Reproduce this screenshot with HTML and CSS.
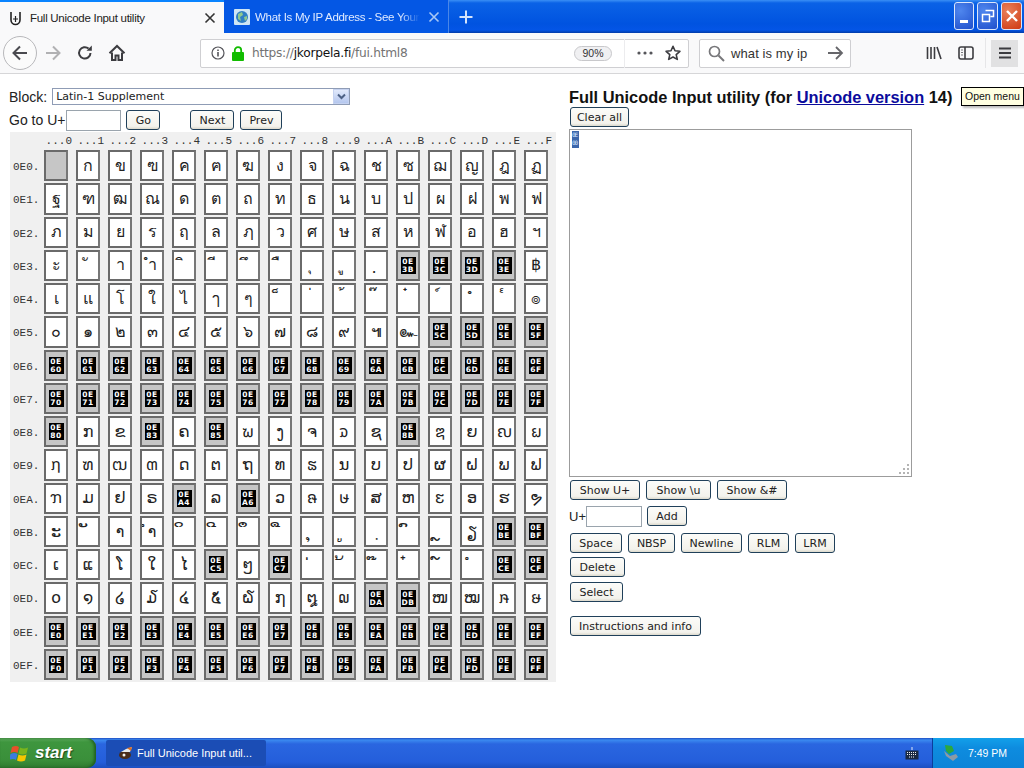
FILE: index.html
```html
<!DOCTYPE html>
<html lang="en">
<head>
<meta charset="utf-8">
<title>Full Unicode Input utility</title>
<link rel="stylesheet" href="styles.css">
</head>
<body>
<div class="window">
  <div class="tabbar">
    <div class="tab active">
      <svg class="fav" width="16" height="16" viewBox="0 0 16 16"><path d="M3 2v8a4.500 4.500 0 0 0 9 0V2" fill="none" stroke="#222" stroke-width="1.600"/><path d="M7.500 6v6M5 9h5" stroke="#222" stroke-width="1.200"/></svg>
      <span class="tabtitle">Full Unicode Input utility</span>
      <svg class="tabx" width="12" height="12" viewBox="0 0 12 12"><path d="M1.500 1.500l9 9M10.500 1.500l-9 9" stroke="#333" stroke-width="1.600"/></svg>
    </div>
    <div class="tab other">
      <svg class="fav" width="16" height="16" viewBox="0 0 16 16"><rect width="16" height="16" rx="1" fill="#cfe6f5"/><circle cx="8" cy="8" r="6" fill="#2f7fc4"/><path d="M4 5l4-2 1 3-3 2 1 4-3-2zM10 8l3-1 0 3-2 2z" fill="#8fc98f"/></svg>
      <span class="tabtitle">What Is My IP Address - See Your</span>
      <svg class="tabx" width="12" height="12" viewBox="0 0 12 12"><path d="M1.500 1.500l9 9M10.500 1.500l-9 9" stroke="#a9c8f5" stroke-width="1.600"/></svg>
    </div>
    <svg class="newtab" width="16" height="16" viewBox="0 0 16 16"><path d="M8 1.500v13M1.500 8h13" stroke="#d5e4fb" stroke-width="2"/></svg>
    <div class="winbtns">
      <div class="wb wb-blue"><span class="wb-min"></span></div>
      <div class="wb wb-blue"><svg width="14" height="14" viewBox="0 0 14 14"><path d="M4.500 1.500h8v6h-3M1.500 5.500h7v7h-7z" fill="none" stroke="#fff" stroke-width="1.500"/></svg></div>
      <div class="wb wb-red"><svg width="14" height="14" viewBox="0 0 14 14"><path d="M2 2l10 10M12 2L2 12" stroke="#fff" stroke-width="2.400"/></svg></div>
    </div>
  </div>

  <div class="toolbar">
    <div class="backbtn"><svg width="18" height="18" viewBox="0 0 18 18"><path d="M16 9H2.500M9 2.500L2.500 9 9 15.500" fill="none" stroke="#4a4a4f" stroke-width="2"/></svg></div>
    <svg class="tool fwd" width="18" height="18" viewBox="0 0 18 18"><path d="M2 9h13.500M9 2.500L15.500 9 9 15.500" fill="none" stroke="#b1b1b3" stroke-width="2"/></svg>
    <svg class="tool reload" width="16" height="16" viewBox="0 0 16 16"><path d="M13.500 8A5.700 5.700 0 1 1 11.600 3.600" fill="none" stroke="#3c3c40" stroke-width="2"/><path d="M9.500 5.800h5.300V.5z" fill="#3c3c40"/></svg>
    <svg class="tool home" width="18" height="18" viewBox="0 0 18 18"><path d="M1.500 9.200L9 2l7.500 7.200" fill="none" stroke="#3c3c40" stroke-width="2"/><path d="M4 8.500V16h3.500v-4.500h3V16H14V8.500" fill="none" stroke="#3c3c40" stroke-width="2"/></svg>
    <div class="urlbar">
      <svg class="info" width="14" height="14" viewBox="0 0 14 14"><circle cx="7" cy="7" r="6" fill="none" stroke="#55555a" stroke-width="1.200"/><path d="M7 6v4.500M7 3.400v1.500" stroke="#55555a" stroke-width="1.600"/></svg>
      <svg class="lock" width="14" height="15" viewBox="0 0 14 15"><rect x="1" y="6" width="12" height="9" rx="1" fill="#12bc00"/><path d="M3.800 6V4.300a3.200 3.200 0 0 1 6.400 0V6" fill="none" stroke="#12bc00" stroke-width="1.800"/></svg>
      <span class="url"><span class="dim">https://</span>jkorpela.fi<span class="dim">/fui.html8</span></span>
      <span class="zoompill">90%</span>
      <span class="urlsep"></span>
      <svg class="dots" width="16" height="4" viewBox="0 0 16 4"><circle cx="2" cy="2" r="1.600" fill="#55555a"/><circle cx="8" cy="2" r="1.600" fill="#55555a"/><circle cx="14" cy="2" r="1.600" fill="#55555a"/></svg>
      <svg class="star" width="16" height="16" viewBox="0 0 16 16"><path d="M8 1.300l2 4.500 4.900.5-3.700 3.300 1.100 4.800L8 12l-4.300 2.400 1.100-4.800L1.100 6.300l4.900-.5z" fill="none" stroke="#3c3c40" stroke-width="1.600" stroke-linejoin="round"/></svg>
    </div>
    <div class="searchbar">
      <svg class="mag" width="17" height="17" viewBox="0 0 17 17"><circle cx="6.500" cy="6.500" r="5" fill="none" stroke="#77777a" stroke-width="1.700"/><path d="M10.500 10.500l5.500 5.500" stroke="#77777a" stroke-width="2"/></svg>
      <span class="query">what is my ip</span>
      <svg class="go" width="17" height="16" viewBox="0 0 17 16"><path d="M1 8h14M9 2l6 6-6 6" fill="none" stroke="#66666a" stroke-width="1.800"/></svg>
    </div>
    <svg class="lib" width="16" height="14" viewBox="0 0 16 14"><path d="M1.500 1v12M5 1v12M8.500 1v12M11 1l4 12" stroke="#3c3c40" stroke-width="1.600"/></svg>
    <svg class="side" width="16" height="14" viewBox="0 0 16 14"><rect x="1" y="1" width="14" height="12" rx="2" fill="none" stroke="#3c3c40" stroke-width="1.600"/><path d="M7 1v12" stroke="#3c3c40" stroke-width="1.600"/><path d="M3 4h2M3 6.500h2M3 9h2" stroke="#77777a"/></svg>
    <span class="toolsep"></span>
    <div class="menu"><svg width="14" height="12" viewBox="0 0 14 12"><path d="M1 1.500h12M1 6h12M1 10.500h12" stroke="#3c3c40" stroke-width="1.800"/></svg></div>
  </div>

  <div class="page">
    <div class="left">
      <div class="blockrow">
        <label class="lab">Block:</label>
        <div class="select"><span>Latin-1 Supplement</span><span class="arrow"><svg width="9" height="7" viewBox="0 0 9 7"><path d="M1 1.500l3.500 3.500L8 1.500" fill="none" stroke="#4d6185" stroke-width="2"/></svg></span></div>
      </div>
      <div class="gorow">
        <span class="lab">Go to U+</span>
        <input class="field goin" type="text">
        <button class="btn b-go">Go</button>
        <button class="btn b-next">Next</button>
        <button class="btn b-prev">Prev</button>
      </div>
      <div class="chars">
        <span></span><span class="hd">...0</span><span class="hd">...1</span><span class="hd">...2</span><span class="hd">...3</span><span class="hd">...4</span><span class="hd">...5</span><span class="hd">...6</span><span class="hd">...7</span><span class="hd">...8</span><span class="hd">...9</span><span class="hd">...A</span><span class="hd">...B</span><span class="hd">...C</span><span class="hd">...D</span><span class="hd">...E</span><span class="hd">...F</span>
        <span class="rl">0E0.</span><button class="c m"></button><button class="c">ก</button><button class="c">ข</button><button class="c">ฃ</button><button class="c">ค</button><button class="c">ฅ</button><button class="c">ฆ</button><button class="c">ง</button><button class="c">จ</button><button class="c">ฉ</button><button class="c">ช</button><button class="c">ซ</button><button class="c">ฌ</button><button class="c">ญ</button><button class="c">ฎ</button><button class="c">ฏ</button>
        <span class="rl">0E1.</span><button class="c">ฐ</button><button class="c">ฑ</button><button class="c">ฒ</button><button class="c">ณ</button><button class="c">ด</button><button class="c">ต</button><button class="c">ถ</button><button class="c">ท</button><button class="c">ธ</button><button class="c">น</button><button class="c">บ</button><button class="c">ป</button><button class="c">ผ</button><button class="c">ฝ</button><button class="c">พ</button><button class="c">ฟ</button>
        <span class="rl">0E2.</span><button class="c">ภ</button><button class="c">ม</button><button class="c">ย</button><button class="c">ร</button><button class="c">ฤ</button><button class="c">ล</button><button class="c">ฦ</button><button class="c">ว</button><button class="c">ศ</button><button class="c">ษ</button><button class="c">ส</button><button class="c">ห</button><button class="c">ฬ</button><button class="c">อ</button><button class="c">ฮ</button><button class="c">ฯ</button>
        <span class="rl">0E3.</span><button class="c">ะ</button><button class="c">ั</button><button class="c">า</button><button class="c">ำ</button><button class="c">ิ</button><button class="c">ี</button><button class="c">ึ</button><button class="c">ื</button><button class="c">ุ</button><button class="c">ู</button><button class="c">ฺ</button><button class="c m"><i class="h">0E<br>3B</i></button><button class="c m"><i class="h">0E<br>3C</i></button><button class="c m"><i class="h">0E<br>3D</i></button><button class="c m"><i class="h">0E<br>3E</i></button><button class="c">฿</button>
        <span class="rl">0E4.</span><button class="c">เ</button><button class="c">แ</button><button class="c">โ</button><button class="c">ใ</button><button class="c">ไ</button><button class="c">ๅ</button><button class="c">ๆ</button><button class="c">็</button><button class="c">่</button><button class="c">้</button><button class="c">๊</button><button class="c">๋</button><button class="c">์</button><button class="c">ํ</button><button class="c">๎</button><button class="c">๏</button>
        <span class="rl">0E5.</span><button class="c">๐</button><button class="c">๑</button><button class="c">๒</button><button class="c">๓</button><button class="c">๔</button><button class="c">๕</button><button class="c">๖</button><button class="c">๗</button><button class="c">๘</button><button class="c">๙</button><button class="c">๚</button><button class="c">๛</button><button class="c m"><i class="h">0E<br>5C</i></button><button class="c m"><i class="h">0E<br>5D</i></button><button class="c m"><i class="h">0E<br>5E</i></button><button class="c m"><i class="h">0E<br>5F</i></button>
        <span class="rl">0E6.</span><button class="c m"><i class="h">0E<br>60</i></button><button class="c m"><i class="h">0E<br>61</i></button><button class="c m"><i class="h">0E<br>62</i></button><button class="c m"><i class="h">0E<br>63</i></button><button class="c m"><i class="h">0E<br>64</i></button><button class="c m"><i class="h">0E<br>65</i></button><button class="c m"><i class="h">0E<br>66</i></button><button class="c m"><i class="h">0E<br>67</i></button><button class="c m"><i class="h">0E<br>68</i></button><button class="c m"><i class="h">0E<br>69</i></button><button class="c m"><i class="h">0E<br>6A</i></button><button class="c m"><i class="h">0E<br>6B</i></button><button class="c m"><i class="h">0E<br>6C</i></button><button class="c m"><i class="h">0E<br>6D</i></button><button class="c m"><i class="h">0E<br>6E</i></button><button class="c m"><i class="h">0E<br>6F</i></button>
        <span class="rl">0E7.</span><button class="c m"><i class="h">0E<br>70</i></button><button class="c m"><i class="h">0E<br>71</i></button><button class="c m"><i class="h">0E<br>72</i></button><button class="c m"><i class="h">0E<br>73</i></button><button class="c m"><i class="h">0E<br>74</i></button><button class="c m"><i class="h">0E<br>75</i></button><button class="c m"><i class="h">0E<br>76</i></button><button class="c m"><i class="h">0E<br>77</i></button><button class="c m"><i class="h">0E<br>78</i></button><button class="c m"><i class="h">0E<br>79</i></button><button class="c m"><i class="h">0E<br>7A</i></button><button class="c m"><i class="h">0E<br>7B</i></button><button class="c m"><i class="h">0E<br>7C</i></button><button class="c m"><i class="h">0E<br>7D</i></button><button class="c m"><i class="h">0E<br>7E</i></button><button class="c m"><i class="h">0E<br>7F</i></button>
        <span class="rl">0E8.</span><button class="c m"><i class="h">0E<br>80</i></button><button class="c">ກ</button><button class="c">ຂ</button><button class="c m"><i class="h">0E<br>83</i></button><button class="c">ຄ</button><button class="c m"><i class="h">0E<br>85</i></button><button class="c">ຆ</button><button class="c">ງ</button><button class="c">ຈ</button><button class="c">ຉ</button><button class="c">ຊ</button><button class="c m"><i class="h">0E<br>8B</i></button><button class="c">ຌ</button><button class="c">ຍ</button><button class="c">ຎ</button><button class="c">ຏ</button>
        <span class="rl">0E9.</span><button class="c">ຐ</button><button class="c">ຑ</button><button class="c">ຒ</button><button class="c">ຓ</button><button class="c">ດ</button><button class="c">ຕ</button><button class="c">ຖ</button><button class="c">ທ</button><button class="c">ຘ</button><button class="c">ນ</button><button class="c">ບ</button><button class="c">ປ</button><button class="c">ຜ</button><button class="c">ຝ</button><button class="c">ພ</button><button class="c">ຟ</button>
        <span class="rl">0EA.</span><button class="c">ຠ</button><button class="c">ມ</button><button class="c">ຢ</button><button class="c">ຣ</button><button class="c m"><i class="h">0E<br>A4</i></button><button class="c">ລ</button><button class="c m"><i class="h">0E<br>A6</i></button><button class="c">ວ</button><button class="c">ຨ</button><button class="c">ຩ</button><button class="c">ສ</button><button class="c">ຫ</button><button class="c">ຬ</button><button class="c">ອ</button><button class="c">ຮ</button><button class="c">ຯ</button>
        <span class="rl">0EB.</span><button class="c">ະ</button><button class="c">ັ</button><button class="c">າ</button><button class="c">ຳ</button><button class="c">ິ</button><button class="c">ີ</button><button class="c">ຶ</button><button class="c">ື</button><button class="c">ຸ</button><button class="c">ູ</button><button class="c">຺</button><button class="c">ົ</button><button class="c">ຼ</button><button class="c">ຽ</button><button class="c m"><i class="h">0E<br>BE</i></button><button class="c m"><i class="h">0E<br>BF</i></button>
        <span class="rl">0EC.</span><button class="c">ເ</button><button class="c">ແ</button><button class="c">ໂ</button><button class="c">ໃ</button><button class="c">ໄ</button><button class="c m"><i class="h">0E<br>C5</i></button><button class="c">ໆ</button><button class="c m"><i class="h">0E<br>C7</i></button><button class="c">່</button><button class="c">້</button><button class="c">໊</button><button class="c">໋</button><button class="c">໌</button><button class="c">ໍ</button><button class="c m"><i class="h">0E<br>CE</i></button><button class="c m"><i class="h">0E<br>CF</i></button>
        <span class="rl">0ED.</span><button class="c">໐</button><button class="c">໑</button><button class="c">໒</button><button class="c">໓</button><button class="c">໔</button><button class="c">໕</button><button class="c">໖</button><button class="c">໗</button><button class="c">໘</button><button class="c">໙</button><button class="c m"><i class="h">0E<br>DA</i></button><button class="c m"><i class="h">0E<br>DB</i></button><button class="c">ໜ</button><button class="c">ໝ</button><button class="c">ໞ</button><button class="c">ໟ</button>
        <span class="rl">0EE.</span><button class="c m"><i class="h">0E<br>E0</i></button><button class="c m"><i class="h">0E<br>E1</i></button><button class="c m"><i class="h">0E<br>E2</i></button><button class="c m"><i class="h">0E<br>E3</i></button><button class="c m"><i class="h">0E<br>E4</i></button><button class="c m"><i class="h">0E<br>E5</i></button><button class="c m"><i class="h">0E<br>E6</i></button><button class="c m"><i class="h">0E<br>E7</i></button><button class="c m"><i class="h">0E<br>E8</i></button><button class="c m"><i class="h">0E<br>E9</i></button><button class="c m"><i class="h">0E<br>EA</i></button><button class="c m"><i class="h">0E<br>EB</i></button><button class="c m"><i class="h">0E<br>EC</i></button><button class="c m"><i class="h">0E<br>ED</i></button><button class="c m"><i class="h">0E<br>EE</i></button><button class="c m"><i class="h">0E<br>EF</i></button>
        <span class="rl">0EF.</span><button class="c m"><i class="h">0E<br>F0</i></button><button class="c m"><i class="h">0E<br>F1</i></button><button class="c m"><i class="h">0E<br>F2</i></button><button class="c m"><i class="h">0E<br>F3</i></button><button class="c m"><i class="h">0E<br>F4</i></button><button class="c m"><i class="h">0E<br>F5</i></button><button class="c m"><i class="h">0E<br>F6</i></button><button class="c m"><i class="h">0E<br>F7</i></button><button class="c m"><i class="h">0E<br>F8</i></button><button class="c m"><i class="h">0E<br>F9</i></button><button class="c m"><i class="h">0E<br>FA</i></button><button class="c m"><i class="h">0E<br>FB</i></button><button class="c m"><i class="h">0E<br>FC</i></button><button class="c m"><i class="h">0E<br>FD</i></button><button class="c m"><i class="h">0E<br>FE</i></button><button class="c m"><i class="h">0E<br>FF</i></button>
      </div>
    </div>
    <div class="right">
      <h1 class="title">Full Unicode Input utility (for <a class="link" href="#">Unicode version</a> 14)</h1>
      <button class="btn b-clear">Clear all</button>
      <div class="textarea"><span class="sel"><i class="selh">0E<br>00</i></span>
        <svg class="grip" width="12" height="12" viewBox="0 0 12 12"><path d="M9 1h2v2H9zM5 5h2v2H5zM9 5h2v2H9zM1 9h2v2H1zM5 9h2v2H5zM9 9h2v2H9z" fill="#b4b4b4"/></svg>
      </div>
      <div class="row r-show"><button class="btn w70">Show U+</button><button class="btn w65">Show \u</button><button class="btn w70">Show &amp;#</button></div>
      <div class="row r-add"><span class="lab lab-small">U+</span><input class="field addin" type="text"><button class="btn w40">Add</button></div>
      <div class="row r-ins"><button class="btn w52">Space</button><button class="btn w47">NBSP</button><button class="btn w61">Newline</button><button class="btn w41">RLM</button><button class="btn w40">LRM</button></div>
      <div class="row r-del"><button class="btn w55">Delete</button></div>
      <div class="row r-sel"><button class="btn w53">Select</button></div>
      <div class="row r-info"><button class="btn w131">Instructions and info</button></div>
    </div>
    <div class="tooltip">Open menu</div>
  </div>

  <div class="taskbar">
    <div class="start">
      <svg width="20" height="20" viewBox="0 0 20 20"><path d="M2 4q4-2 7 0l-1.500 6q-3-2-7 0z" fill="#e8502a"/><path d="M10 4.500q4 2 8 0l-1.500 6q-4 2-8 0z" fill="#7ab51d"/><path d="M.5 11q4-2 7 0L6 17q-3-2-7 0z" fill="#3c7be0"/><path d="M8.500 11.500q4 2 8 0L15 17.500q-4 2-8 0z" fill="#f6c700"/></svg>
      <span class="starttext">start</span>
    </div>
    <div class="taskbtn">
      <svg width="16" height="16" viewBox="0 0 16 16"><ellipse cx="7" cy="10" rx="6" ry="4" fill="#4a2c1a"/><path d="M3 7l5-3 6-2-2 5z" fill="#e9e9e9"/><path d="M9 3l5-1-1 4z" fill="#e07020"/><circle cx="6" cy="10" r="1.500" fill="#f2f2f2"/></svg>
      <span>Full Unicode Input util...</span>
    </div>
    <div class="taskfill">
      <svg width="14" height="13" viewBox="0 0 14 13"><path d="M7 0v3" stroke="#dfe8f8"/><rect x=".5" y="3.500" width="13" height="9" fill="#1b2a44"/><path d="M2 5.500h10M2 7.500h10M4 10h6" stroke="#f4f4f4" stroke-width="1.200" stroke-dasharray="1 1"/></svg>
    </div>
    <div class="tray">
      <svg width="18" height="18" viewBox="0 0 18 18"><path d="M2 7l6 5 6-2 2 3-5 4-7-5z" fill="#8d9aa5"/><path d="M3 1l7 1 2 5-5 3-3-3z" fill="#2ca83c"/></svg>
      <span class="clock">7:49 PM</span>
    </div>
  </div>
</div>
</body>
</html>
```
FILE: styles.css
```css
* { box-sizing: border-box; }
html, body { margin: 0; padding: 0; height: 100%; overflow: hidden; background: #fff; }
body { font-family: "Liberation Sans", Arial, sans-serif; color: #111; }
.window { width: 1024px; height: 768px; display: flex; flex-direction: column; }

/* tabs */
.tabbar { height: 33px; flex: none; display: flex; align-items: stretch; background: linear-gradient(#3a8ff5 0, #0a62e6 3px, #0053e0 24px, #0355e6 30px, #013ba8 33px); }
.tab { width: 224px; display: flex; align-items: center; padding: 0 8px; font-size: 11.5px; }
.tab.active { background: #f9f9fa; border-top: 2px solid #0a84ff; color: #222; }
.tab.other { width: 225px; padding-left: 10px; color: #dfeaff; background: #0457e4; border-right: 1px solid #4a86e8; }
.fav { flex: none; margin-right: 5px; }
.active .fav { margin-right: 6px; }
.tabtitle { flex: 1; white-space: nowrap; overflow: hidden; letter-spacing: -.28px; }
.other .tabtitle { mask-image: linear-gradient(to right, #000 88%, transparent); }
.tabx { flex: none; margin-left: 8px; }
.newtab { align-self: center; margin-left: 9px; }
.winbtns { margin-left: auto; display: flex; gap: 3px; padding: 2px 2px 3px 0; }
.wb { width: 20px; height: 28px; border: 1px solid #dbe6fb; border-radius: 3px; display: flex; align-items: center; justify-content: center; background: radial-gradient(circle at 30% 30%, #4f86ee, #2050cc); }
.wb + .wb { width: 21px; }
.wb-red { background: radial-gradient(circle at 30% 30%, #e9805a, #cf3a12); }
.wb-min { width: 8px; height: 3px; background: #fff; margin-top: 10px; }

/* toolbar */
.toolbar { height: 41px; flex: none; display: flex; align-items: center; background: #f9f9fa; border-bottom: 1px solid #d6d6d8; padding-left: 3px; }
.backbtn { width: 34px; height: 34px; border-radius: 50%; border: 1px solid #b8b8bb; background: #fbfbfb; display: flex; align-items: center; justify-content: center; flex: none; }
.tool { flex: none; }
.fwd { margin-left: 7px; }
.reload { margin-left: 15px; }
.home { margin-left: 15px; }
.urlbar { width: 489px; height: 29px; margin-left: 74px; background: #fff; border: 1px solid #cfcfd2; border-radius: 2px; display: flex; align-items: center; padding-left: 10px; }
.lock { margin-left: 6px; }
.url { margin-left: 7px; font: 12.2px "DejaVu Sans", sans-serif; letter-spacing: -.25px; color: #111; }
.dim { color: #737373; }
.zoompill { margin-left: auto; width: 38px; height: 15px; border: 1px solid #c8c8cb; border-radius: 8px; background: #f0f0f2; font-size: 10.5px; line-height: 13px; text-align: center; color: #333; }
.urlsep { width: 1px; height: 29px; background: #ececee; margin-left: 12px; }
.dots { margin-left: 12px; }
.star { margin-left: 12px; margin-right: 7px; }
.searchbar { width: 152px; height: 29px; margin-left: 10px; background: #fff; border: 1px solid #cfcfd2; border-radius: 2px; display: flex; align-items: center; padding-left: 8px; }
.query { margin-left: 6px; font-size: 13px; color: #333; letter-spacing: .1px; }
.go { margin-left: auto; margin-right: 6px; }
.lib { margin-left: 75px; }
.side { margin-left: 16px; }
.toolsep { width: 1px; height: 30px; background: #e6e6e8; margin-left: 11px; }
.menu { width: 27px; height: 27px; margin-left: 5px; background: #e1e1e2; display: flex; align-items: center; justify-content: center; }

/* page */
.page { flex: 1; display: flex; position: relative; min-height: 0; background: #fff; }
.left { width: 569px; flex: none; padding: 14px 0 0 9px; }
.lab { font-size: 14px; color: #222; }
.lab-small { font-size: 13px; }
.blockrow { display: flex; align-items: center; height: 17px; }
.select { width: 298px; height: 17px; margin-left: 5px; border: 1px solid #8f9cb5; display: flex; align-items: center; justify-content: space-between; padding-left: 3px; font: 11px "DejaVu Sans", sans-serif; color: #222; }
.arrow { width: 16px; height: 15px; background: linear-gradient(#e1e9fb, #b5c7ee); border: 1px solid #c5d2f0; display: flex; align-items: center; justify-content: center; }
.gorow { display: flex; align-items: center; height: 22px; margin-top: 4px; }
.field { border: 1px solid #9aa4ad; background: #fff; margin: 0; padding: 0; }
.goin { width: 55px; height: 21px; margin-left: 1px; }
.btn { height: 20px; padding: 0; border: 1px solid #20405a; border-radius: 3px; background: linear-gradient(#fcfcf9, #f3f2ec 85%, #dcd9cc); font: 11px "DejaVu Sans", sans-serif; color: #222; }
.b-go { width: 34px; margin-left: 5px; }
.b-next { width: 44px; margin-left: 30px; }
.b-prev { width: 42px; margin-left: 6px; }

.chars { width: 546px; margin: 1px 0 0 1px; background: #f0f0f0; display: grid; grid-template-columns: 34px repeat(16, 32px); grid-template-rows: 18px repeat(16, 33.27px); align-items: start; }
.hd { font: 11px/18px "Liberation Mono", monospace; color: #333; text-align: right; padding-right: 3px; transform: translateX(-1px); white-space: nowrap; }
.rl { font: 11px/34px "Liberation Mono", monospace; color: #333; padding-left: 3px; }
.c { width: 24px; height: 31.27px; padding: 0; border: 2px solid #6a6a6a; border-right-color: #777; background: #fff; font: 16px/1 "DejaVu Sans", "Noto Sans", sans-serif; color: #222; display: flex; align-items: center; justify-content: center; overflow: hidden; }
.m { background: #c6c6c6; }
.h { display: block; width: 15px; height: 17px; padding-top: 1px; background: #000; color: #fff; font: bold 7.5px/8px "DejaVu Sans", sans-serif; letter-spacing: .6px; text-align: center; white-space: nowrap; font-style: normal; }

/* right */
.right { flex: 1; padding-top: 13px; }
.title { margin: 0; font-size: 16.4px; line-height: 20px; font-weight: bold; color: #111; white-space: nowrap; }
.link { color: #0b0b9c; }
.b-clear { display: block; width: 59px; margin-left: 1px; }
.textarea { position: relative; width: 343px; height: 348px; margin-top: 2px; border: 1px solid #9c9c9c; padding: 1px 2px; background: #fff; }
.sel { display: block; width: 7px; height: 17px; background: #3b66ab; overflow: hidden; }
.selh { display: block; color: #d8e4ff; font: 6px/8px "DejaVu Sans Mono", monospace; letter-spacing: -1px; }
.grip { position: absolute; right: 1px; bottom: 1px; }
.row { display: flex; align-items: center; gap: 6px; padding-left: 1px; }
.r-show { margin-top: 3px; }
.r-add { margin-top: 5px; gap: 0; padding-left: 0; height: 22px; }
.addin { width: 56px; height: 21px; }
.r-add .btn { margin-left: 5px; }
.r-ins { margin-top: 6px; }
.r-del { margin-top: 4px; }
.r-sel { margin-top: 5px; }
.r-info { margin-top: 14px; }
.w40 { width: 40px; } .w41 { width: 41px; } .w47 { width: 47px; } .w52 { width: 52px; } .w53 { width: 53px; } .w55 { width: 55px; } .w61 { width: 61px; } .w65 { width: 65px; } .w70 { width: 70px; } .w131 { width: 131px; }
.tooltip { position: absolute; left: 961px; top: 13px; width: 63px; height: 19px; background: #ffffe1; border: 1px solid #000; font: 10.5px/17px "Liberation Sans", sans-serif; padding-left: 3px; white-space: nowrap; box-shadow: 2px 2px 2px #bbb; }

/* taskbar */
.taskbar { height: 30px; flex: none; display: flex; align-items: stretch; background: linear-gradient(#1f4fc4 0, #3b8af0 2px, #2a66e0 6px, #245edb 24px, #1c4fc0 30px); color: #fff; }
.start { width: 96px; display: flex; align-items: center; padding-left: 10px; gap: 5px; background: linear-gradient(#62b062 0, #3e963e 4px, #3a8f3a 22px, #2f7a2f 30px); border-radius: 0 9px 9px 0; box-shadow: inset -2px 0 3px #205f20; }
.starttext { font: italic bold 17px "Liberation Sans", sans-serif; text-shadow: 1px 1px 1px #1c4a1c; }
.taskbtn { width: 160px; margin: 2px 0 2px 10px; display: flex; align-items: center; gap: 3px; padding-left: 12px; background: #1b4db5; border-radius: 2px; font-size: 11px; }
.taskfill { flex: 1; display: flex; align-items: center; justify-content: flex-end; padding-right: 13px; }
.tray { width: 92px; display: flex; align-items: center; gap: 8px; padding-left: 9px; background: linear-gradient(#12a0ea 0, #0e8cdf 10px, #0c84d8 30px); border-left: 1px solid #0b3e9c; font-size: 10.5px; }
```
